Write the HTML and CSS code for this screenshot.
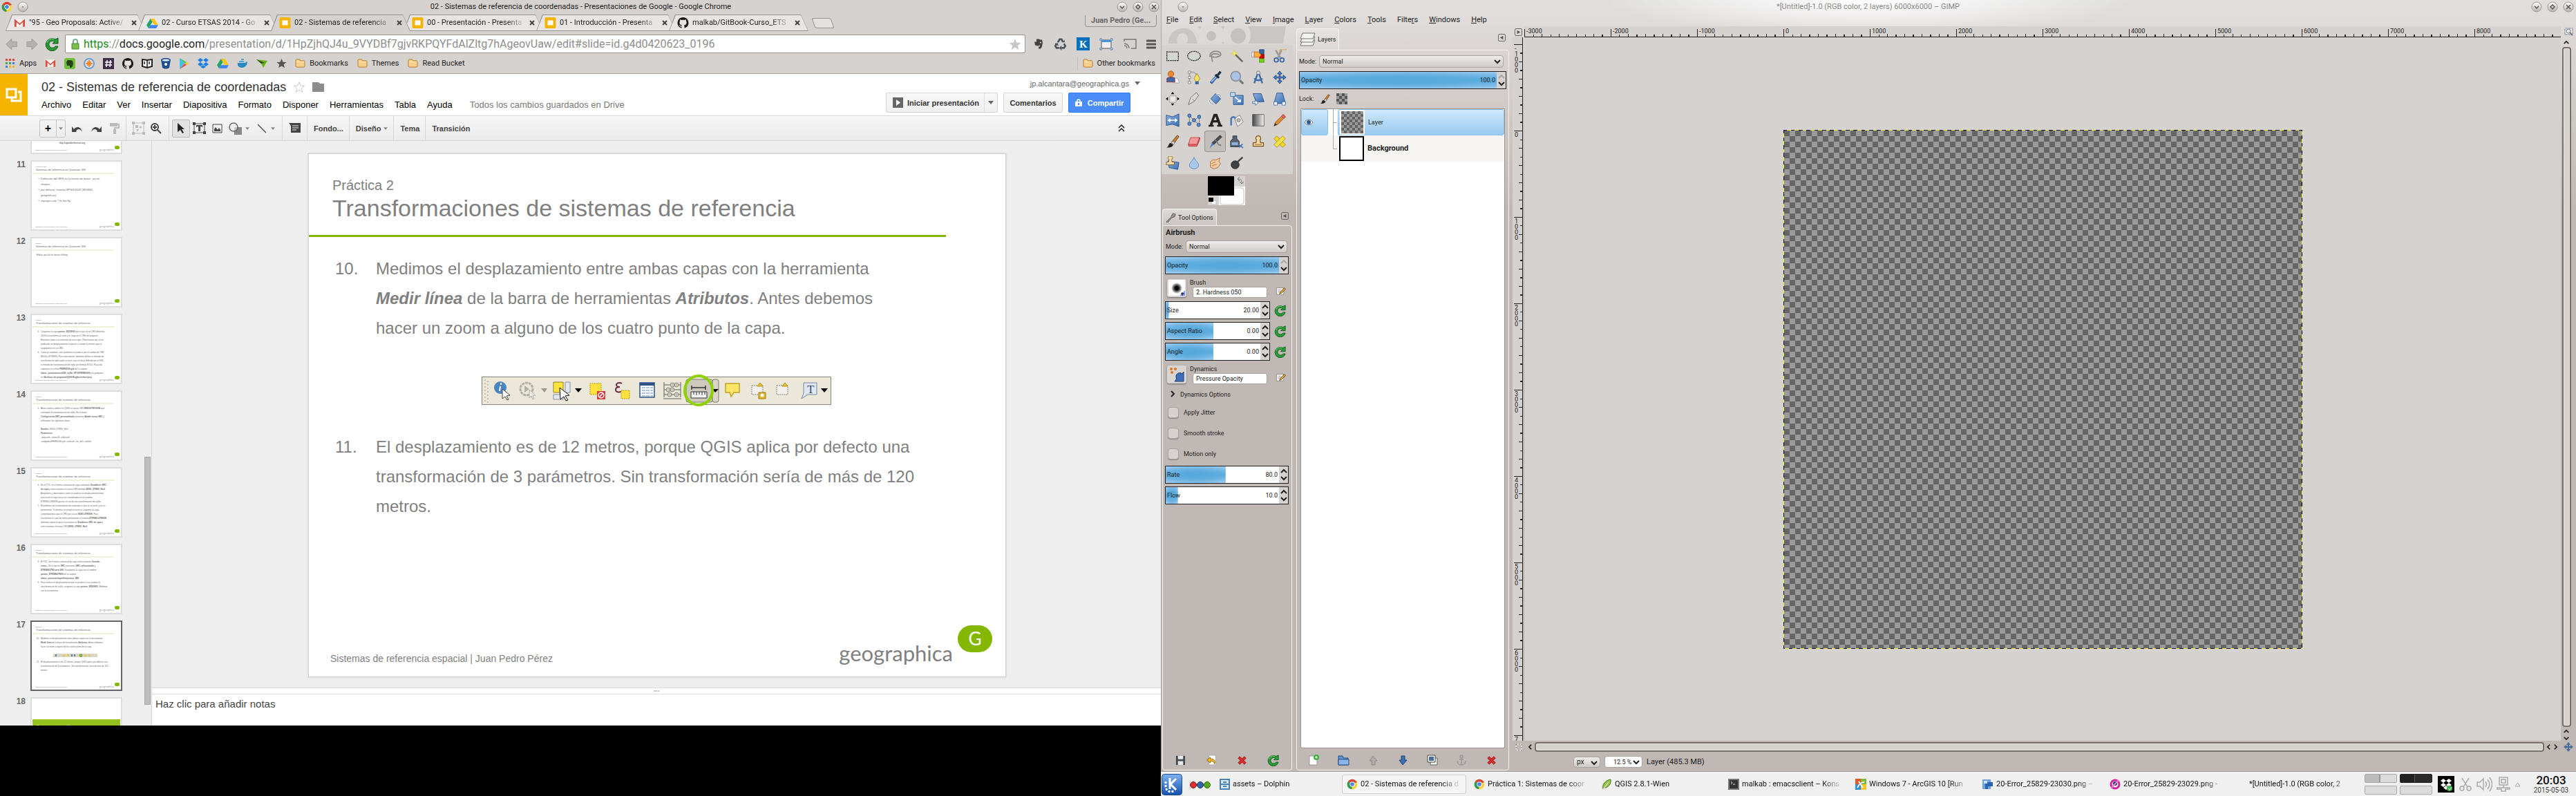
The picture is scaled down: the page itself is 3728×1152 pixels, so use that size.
FILE: index.html
```html
<!DOCTYPE html>
<html lang="es">
<head>
<meta charset="utf-8">
<title>02 - Sistemas de referencia de coordenadas</title>
<link rel="stylesheet" href="styles.css">
</head>
<body>
<svg class="defs" aria-hidden="true">
  <defs>
    <linearGradient id="g-blue" x1="0" y1="0" x2="1" y2="1"><stop offset="0" stop-color="#8fb4dd"/><stop offset="1" stop-color="#3a6fb5"/></linearGradient>
    <linearGradient id="g-bw"><stop offset="0" stop-color="#444"/><stop offset="1" stop-color="#f4f4f4"/></linearGradient>
    <linearGradient id="g-knob" x1="0" y1="0" x2="0" y2="1"><stop offset="0" stop-color="#fff"/><stop offset="1" stop-color="#b5b1ae"/></linearGradient>
    <radialGradient id="g-brush"><stop offset="0" stop-color="#000"/><stop offset=".35" stop-color="#111"/><stop offset="1" stop-color="#000" stop-opacity="0"/></radialGradient>
    <linearGradient id="g-kde" x1="0" y1="0" x2="0" y2="1"><stop offset="0" stop-color="#7fb2ee"/><stop offset="1" stop-color="#1451ae"/></linearGradient>
  </defs>
  <symbol id="chrome" viewBox="0 0 24 24"><circle cx="12" cy="12" r="11" fill="#fdd23a"/><path d="M12 12L2.500 6.500A11 11 0 0 1 21.500 6.500z" fill="#dc4437"/><path d="M12 12L2.500 6.500A11 11 0 0 0 11 23z" fill="#2e9a50"/><path d="M12 7h9.800" stroke="#dc4437" stroke-width="2"/><circle cx="12" cy="12" r="5.500" fill="#fff"/><circle cx="12" cy="12" r="4.200" fill="#4a84e8"/></symbol>
  <symbol id="gmail" viewBox="0 0 18 14"><path d="M1 1h16v12H1z" fill="#f4f2f0"/><path d="M1 13V1l8 7 8-7v12h-3V6L9 10.500 4 6v7z" fill="#dc4b3e"/></symbol>
  <symbol id="drive" viewBox="0 0 18 16"><path d="M6 1h6l6 10h-6z" fill="#fbc714"/><path d="M6 1l3 5-6 10-3-5z" fill="#21a464"/><path d="M6 11h12l-3 5H3z" fill="#4285f4"/></symbol>
  <symbol id="slides" viewBox="0 0 16 16"><rect width="16" height="16" rx="2" fill="#f4b400"/><path d="M4 4.500h8v7H4z" fill="#fff"/></symbol>
  <symbol id="github" viewBox="0 0 16 16"><path fill="#1b1817" d="M8 0C3.600 0 0 3.600 0 8c0 3.500 2.300 6.500 5.500 7.600.4.100.5-.200.5-.400v-1.500c-2.200.500-2.700-1-2.700-1-.4-.900-.900-1.200-.900-1.200-.7-.500.100-.500.100-.500.800.1 1.200.8 1.200.8.700 1.200 1.900.9 2.300.7.100-.5.300-.9.500-1.100-1.800-.2-3.600-.9-3.600-4 0-.9.300-1.600.8-2.100-.1-.2-.4-1 .1-2.100 0 0 .7-.2 2.200.8a7.600 7.600 0 0 1 4 0c1.500-1 2.200-.8 2.200-.8.400 1.100.2 1.900.1 2.100.5.600.8 1.300.8 2.100 0 3.100-1.900 3.700-3.700 3.900.3.300.6.800.6 1.500v2.200c0 .2.100.5.600.4A8 8 0 0 0 16 8c0-4.400-3.600-8-8-8z"/><path d="M5 4.500h6l1 3c0 2-1.500 3-4 3s-4-1-4-3z" fill="#e6e3e1"/></symbol>
  <symbol id="evernote" viewBox="0 0 16 16"><path d="M5 1h4l1 1h3l1 4-1 6-2 3H8v-3h2v-2l-3 1-4-1-1-5h3z" fill="currentColor"/><circle cx="11" cy="6" r="1" fill="#ddd"/></symbol>
  <symbol id="folder" viewBox="0 0 16 14"><path d="M1 2l1-1h5l1 2h6l1 1v8l-1 1H2l-1-1z" fill="#f8cf8b" stroke="#b47a25"/><path d="M2 5h12" stroke="#fdebc8"/></symbol>
  <symbol id="knob-dot" viewBox="0 0 16 16"><circle cx="8" cy="8" r="7" fill="url(#g-knob)" stroke="#9a9693"/><circle cx="8" cy="8" r="1" fill="#777"/></symbol>
  <symbol id="knob-min" viewBox="0 0 16 16"><circle cx="8" cy="8" r="7" fill="url(#g-knob)" stroke="#9a9693"/><path d="M5 7l3 3 3-3" fill="none" stroke="#555" stroke-width="1.500"/></symbol>
  <symbol id="knob-max" viewBox="0 0 16 16"><circle cx="8" cy="8" r="7" fill="url(#g-knob)" stroke="#9a9693"/><path d="M8 5l3 3-3 3-3-3z" fill="none" stroke="#555" stroke-width="1.500"/></symbol>
  <symbol id="knob-x" viewBox="0 0 16 16"><circle cx="8" cy="8" r="7" fill="url(#g-knob)" stroke="#9a9693"/><path d="M5 5l6 6M11 5l-6 6" stroke="#555" stroke-width="1.500"/></symbol>
  <symbol id="nav-back" viewBox="0 0 20 20"><path d="M10 1v5h8v8h-8v5L1 10z" fill="#b5b2b0" stroke="#9b9896"/></symbol>
  <symbol id="reload" viewBox="0 0 20 20"><path d="M15 3l4-2v8h-8l3-2.500A5 5 0 1 0 15 13h4A9 9 0 1 1 15 3z" fill="#2a9a35" stroke="#0d5a17"/><path d="M3 8a7 7 0 0 1 10-5" fill="none" stroke="#7fd686"/></symbol>
  <symbol id="star" viewBox="0 0 20 20"><path d="M10 1l2.600 6.500 6.900.4-5.300 4.400 1.800 6.700-6-3.800L4 19l1.800-6.700L.5 7.900l6.900-.4z"/></symbol>
  <symbol id="down" viewBox="0 0 8 5"><path d="M0 0h8L4 5z" fill="currentColor"/></symbol>
  <symbol id="chev" viewBox="0 0 12 8"><path d="M2 2l4 4 4-4" fill="none" stroke="#222" stroke-width="2"/></symbol>
  <symbol id="spin" viewBox="0 0 13 24"><path d="M0 0h13v24H0z" fill="#d6d2cf"/><path d="M3 9l4-4 4 4M3 15l4 4 4-4" fill="none" stroke="#222" stroke-width="2"/></symbol>
  <symbol id="spin-max" viewBox="0 0 13 24"><path d="M0 0h13v24H0z" fill="#d6d2cf"/><path d="M3 9l4-4 4 4" fill="none" stroke="#aaa6a3" stroke-width="2"/><path d="M3 15l4 4 4-4" fill="none" stroke="#222" stroke-width="2"/></symbol>
  <symbol id="collapse" viewBox="0 0 12 12"><rect x=".5" y=".5" width="11" height="11" rx="2" fill="none" stroke="#555"/><path d="M8 3v6L3 6z" fill="#555"/></symbol>
  <symbol id="edit" viewBox="0 0 16 16"><path d="M1 3h12v11H1z" fill="#f8f8f6" stroke="#888"/><path d="M3 6h6M3 8h5M3 10h4" stroke="#aaa"/><path d="M6 13l1-3 7-7 2 2-7 7z" fill="#d8a13b" stroke="#694a12"/></symbol>
  <symbol id="redx" viewBox="0 0 16 16"><path d="M4 1l4 4 4-4 3 3-4 4 4 4-3 3-4-4-4 4-3-3 4-4-4-4z" fill="#d92b2b" stroke="#8f1010"/></symbol>
  <symbol id="checker" viewBox="0 0 16 16"><path d="M0 0h16v16H0z" fill="#999"/><path d="M0 0h4v4H0zM8 0h4v4H8zM4 4h4v4H4zM12 4h4v4h-4zM0 8h4v4H0zM8 8h4v4H8zM4 12h4v4H4zM12 12h4v4h-4z" fill="#555"/></symbol>
  <symbol id="brush" viewBox="0 0 24 24"><path d="M20 1l3 2-9 13-4-3z" fill="#c17d32" stroke="#6b3e0b"/><path d="M12 11l4 3-2 3-4-3z" fill="#ddd" stroke="#777"/><path d="M1 22c5-1 3-6 7-8l5 3c0 4-6 6-12 5z" fill="#222"/></symbol>
  <symbol id="arrow-move" viewBox="0 0 24 24"><path d="M12 1l4 5h-3v5h5V8l5 4-5 4v-3h-5v5h3l-4 5-4-5h3v-5H6v3l-5-4 5-4v3h5V6H8z" fill="#4a80c4" stroke="#1e3f73"/></symbol>
  <symbol id="stamp" viewBox="0 0 24 24"><path d="M12 2a4 4 0 0 1 3 7l1 5h5v6H3v-6h5l1-5a4 4 0 0 1 3-7z" fill="#f2d9a5" stroke="#7c5718" stroke-width="1.500"/><path d="M6 17h12" stroke="#7c5718"/></symbol>
</svg>

<div class="desktop">
<div class="screen-left">
<section class="chrome">
  <div class="c-title">
    <svg width="16" height="16"><use href="#chrome"/></svg>
    <svg width="16" height="16"><use href="#knob-dot"/></svg>
    <span class="c-caption">02 - Sistemas de referencia de coordenadas - Presentaciones de Google - Google Chrome</span>
    <svg width="16" height="16"><use href="#knob-min"/></svg>
    <svg width="16" height="16"><use href="#knob-max"/></svg>
    <svg width="16" height="16"><use href="#knob-x"/></svg>
  </div>
  <div class="c-tabs">
    <div class="tab"><svg width="17" height="14"><use href="#gmail"/></svg><span>"95 - Geo Proposals: Active/</span><button aria-label="Cerrar"><svg width="8" height="8" viewBox="0 0 8 8"><path d="M1 1l6 6M7 1L1 7" stroke="#444" stroke-width="2"/></svg></button></div>
    <div class="tab"><svg width="17" height="15"><use href="#drive"/></svg><span>02 - Curso ETSAS 2014 - Go</span><button aria-label="Cerrar"><svg width="8" height="8" viewBox="0 0 8 8"><path d="M1 1l6 6M7 1L1 7" stroke="#444" stroke-width="2"/></svg></button></div>
    <div class="tab on"><svg width="17" height="16"><use href="#slides"/></svg><span>02 - Sistemas de referencia</span><button aria-label="Cerrar"><svg width="8" height="8" viewBox="0 0 8 8"><path d="M1 1l6 6M7 1L1 7" stroke="#444" stroke-width="2"/></svg></button></div>
    <div class="tab"><svg width="17" height="16"><use href="#slides"/></svg><span>00 - Presentación - Presenta</span><button aria-label="Cerrar"><svg width="8" height="8" viewBox="0 0 8 8"><path d="M1 1l6 6M7 1L1 7" stroke="#444" stroke-width="2"/></svg></button></div>
    <div class="tab"><svg width="17" height="16"><use href="#slides"/></svg><span>01 - Introducción - Presenta</span><button aria-label="Cerrar"><svg width="8" height="8" viewBox="0 0 8 8"><path d="M1 1l6 6M7 1L1 7" stroke="#444" stroke-width="2"/></svg></button></div>
    <div class="tab"><svg width="17" height="16"><use href="#github"/></svg><span>malkab/GitBook-Curso_ETS</span><button aria-label="Cerrar"><svg width="8" height="8" viewBox="0 0 8 8"><path d="M1 1l6 6M7 1L1 7" stroke="#444" stroke-width="2"/></svg></button></div>
    <div class="newtab"></div>
    <button class="profile">Juan Pedro (Ge...</button>
  </div>
  <div class="c-bar">
    <svg width="20" height="18"><use href="#nav-back"/></svg>
    <svg class="flip" width="20" height="18"><use href="#nav-back"/></svg>
    <svg width="20" height="20"><use href="#reload"/></svg>
    <div class="omni">
      <svg width="12" height="16" viewBox="0 0 12 16"><path d="M3 8V4a3 3 0 0 1 6 0v4" fill="none" stroke="#7a9" stroke-width="2"/><path d="M1 7h10v8H1z" fill="#7cc04b" stroke="#4b8a2c"/></svg>
      <span class="url"><b>https</b>://<i>docs.google.com</i>/presentation/d/1HpZjhQJ4u_9VYDBf7gjvRKPQYFdAlZltg7hAgeovUaw/edit#slide=id.g4d0420623_0196</span>
      <svg class="favstar" width="18" height="18"><use href="#star"/></svg>
    </div>
    <div class="exts">
      <svg class="ever" width="16" height="17"><use href="#evernote"/></svg>
      <svg width="19" height="18" viewBox="0 0 20 20"><g fill="none" stroke="#4d555c" stroke-width="3"><path d="M6 7l3-5h3l2 4"/><path d="M16 9l2 4-2 3h-4"/><path d="M8 16H4l-2-3 2-4"/></g><path d="M12 7h5V3zM12 12v8l-4-4zM1 9l5-1 1 5z" fill="#4d555c"/></svg>
      <svg width="19" height="19" viewBox="0 0 19 19"><path d="M0 0h19v19H0z" fill="#0070bf"/><text x="4" y="15" class="k-mark">K</text></svg>
      <svg width="20" height="18" viewBox="0 0 20 18"><path d="M3 3h14v12H3z" fill="#eee" stroke="#555"/><path d="M3 3h14v3H3z" fill="#4b93dd"/><path d="M1 4V1h3M16 1h3v3M19 14v3h-3M4 17H1v-3" fill="none" stroke="#2c7fd4"/></svg>
      <svg width="20" height="16" viewBox="0 0 20 16"><path d="M2 4V1h17v13h-7M2 14h0M2 10a4 4 0 0 1 4 4M2 7a7 7 0 0 1 7 7" fill="none" stroke="#777" stroke-width="1.500"/></svg>
      <svg width="14" height="14" viewBox="0 0 14 14"><path d="M1 2h12M1 7h12M1 12h12" stroke="#555" stroke-width="3" stroke-linecap="round"/></svg>
    </div>
  </div>
  <div class="c-marks">
    <a href="#" class="apps"><svg width="14" height="14" viewBox="0 0 14 14"><path d="M0 0h3v3H0zM5 0h3v3H5zM10 0h3v3h-3z" fill="#e0483a"/><path d="M0 5h3v3H0zM5 5h3v3H5z" fill="#3ea654"/><path d="M10 5h3v3h-3z" fill="#3d7fe0"/><path d="M0 10h3v3H0z" fill="#3d7fe0"/><path d="M5 10h3v3H5zM10 10h3v3h-3z" fill="#f0b41c"/></svg>Apps</a>
    <svg width="16" height="13"><use href="#gmail"/></svg>
    <svg width="16" height="16" viewBox="0 0 16 16"><rect width="16" height="16" rx="3" fill="#6fbf3a"/><path d="M5 3h4l3 1 1 4-1 4-2 2H8v-3H4L3 6z" fill="#26431a"/></svg>
    <svg width="16" height="16" viewBox="0 0 16 16"><circle cx="8" cy="8" r="7" fill="#e8edf4" stroke="#6b9bd0" stroke-width="2"/><path d="M8 3v10M3 8h10M5 5l6 6M11 5l-6 6" stroke="#ef8a2e" stroke-width="2"/></svg>
    <svg width="16" height="16" viewBox="0 0 16 16"><path d="M0 0h16v16H0z" fill="#3f2d4a"/><path d="M6 3L5 13M11 3l-1 10M3 6h10M3 10h10" stroke="#fff" stroke-width="1.500"/></svg>
    <svg width="16" height="16"><use href="#github"/></svg>
    <svg width="16" height="14" viewBox="0 0 16 14"><path d="M8 2L1 1v10l7 2 7-2V1z" fill="#fff" stroke="#222" stroke-width="2"/><path d="M8 2v11M4 4v4M11 4v4" stroke="#222" stroke-width="1.500"/></svg>
    <svg width="14" height="16" viewBox="0 0 14 16"><path d="M0 2c4-3 10-3 14 0l-2 12c-3 2-7 2-10 0z" fill="#20508a"/><ellipse cx="7" cy="3" rx="5" ry="1.500" fill="#dbe6f2"/><circle cx="7" cy="9" r="2" fill="#fff"/></svg>
    <svg width="15" height="16" viewBox="0 0 15 16"><path d="M1 0l7 8-7 8z" fill="#3fc1e8"/><path d="M1 0l10 6-3 2z" fill="#43c46b"/><path d="M11 6l4 2-4 2-3-2z" fill="#fbc52b"/><path d="M1 16l10-6-3-2z" fill="#ea4646"/></svg>
    <svg width="16" height="15" viewBox="0 0 16 15"><path d="M4 0l4 3-4 3-4-3zM12 0l4 3-4 3-4-3zM4 6l4 3-4 3-4-3zM12 6l4 3-4 3-4-3zM8 10l4 3-4 2-4-2z" fill="#1a7fe6"/></svg>
    <svg width="17" height="15"><use href="#drive"/></svg>
    <svg width="16" height="13" viewBox="0 0 16 13"><path d="M1 6h10c2 0 2-2 4-2 0 6-4 9-8 9S0 10 1 6z" fill="#2a8bc0"/><path d="M3 3h7v2H3zM6 0h4v2H6z" fill="#4aa6d8"/></svg>
    <svg width="17" height="13" viewBox="0 0 17 13"><path d="M0 1l16 2-6 10-3-6z" fill="#6ab417"/><path d="M0 1l12 5-5 1z" fill="#2f4a14"/></svg>
    <svg class="graystar" width="15" height="15"><use href="#star"/></svg>
    <a href="#"><svg width="15" height="13"><use href="#folder"/></svg>Bookmarks</a>
    <a href="#"><svg width="15" height="13"><use href="#folder"/></svg>Themes</a>
    <a href="#"><svg width="15" height="13"><use href="#folder"/></svg>Read Bucket</a>
    <a href="#" class="other"><svg width="15" height="13"><use href="#folder"/></svg>Other bookmarks</a>
  </div>

  <header class="d-head">
    <div class="d-logo"><svg width="24" height="21" viewBox="0 0 24 21"><path d="M2 2h13v12H2z" fill="none" stroke="#fff" stroke-width="3"/><path d="M18 6h4v13H9v-4" fill="none" stroke="#fff" stroke-width="3"/></svg></div>
    <div class="d-names">
      <h1>02 - Sistemas de referencia de coordenadas
        <svg class="outstar" width="16" height="16"><use href="#star"/></svg><svg width="17" height="14" viewBox="0 0 17 14"><path d="M0 0h9l2 2h6v12H0z" fill="#8c8c8c"/></svg></h1>
      <nav class="d-menu"><button>Archivo</button><button>Editar</button><button>Ver</button><button>Insertar</button><button>Diapositiva</button><button>Formato</button><button>Disponer</button><button>Herramientas</button><button>Tabla</button><button>Ayuda</button><span>Todos los cambios guardados en Drive</span></nav>
    </div>
    <div class="d-right">
      <div class="d-mail">jp.alcantara@geographica.gs <svg width="8" height="5"><use href="#down"/></svg></div>
      <div class="d-btns">
        <div class="split"><button><svg width="15" height="15" viewBox="0 0 15 15"><path d="M0 0h15v15H0z" fill="#666"/><path d="M5 3l6 4.500L5 12z" fill="#fff"/></svg>Iniciar presentación</button><button class="dd" aria-label="Más"><svg width="8" height="5"><use href="#down"/></svg></button></div>
        <button class="btn">Comentarios</button>
        <button class="btn blue"><svg width="10" height="11" viewBox="0 0 10 11"><path d="M3 5V3a2 2 0 0 1 4 0v2" fill="none" stroke="#fff" stroke-width="1.500"/><path d="M0 4h10v7H0z" fill="#fff"/><path d="M4 6h2v3H4z" fill="#4d90fe"/></svg>Compartir</button>
      </div>
    </div>
  </header>

  <div class="d-tools">
    <div class="grp first">
      <div class="plus"><button aria-label="Nueva">+</button><button aria-label="Tipo"><svg width="6" height="4"><use href="#down"/></svg></button></div>
      <button class="ic"><svg width="16" height="10" viewBox="0 0 16 10"><path d="M3 6c4-5 10-4 12 4-3-5-7-5-9-1l2 2H0V2z" fill="#444"/></svg></button>
      <button class="ic"><svg width="16" height="10" viewBox="0 0 16 10"><path d="M13 6C9 1 3 2 1 10c3-5 7-5 9-1l-2 2h8V2z" fill="#444"/></svg></button>
      <button class="ic"><svg width="15" height="16" viewBox="0 0 15 16"><path d="M1 0h11v5H1z" fill="#bbb"/><path d="M12 2h2v5H8v2" fill="none" stroke="#bbb" stroke-width="2"/><path d="M6 9h4v7H6z" fill="#bbb"/></svg></button>
    </div>
    <div class="grp">
      <button class="ic"><svg width="19" height="19" viewBox="0 0 19 19"><path d="M2 2h15v15H2z" fill="none" stroke="#bbb"/><path d="M0 0h4v4H0zM15 0h4v4h-4zM0 15h4v4H0zM15 15h4v4h-4zM5 5h4v4H5zM11 6l4 2-4 2zM6 11h4l-2 4z" fill="#bbb"/></svg></button>
      <button class="ic"><svg width="16" height="16" viewBox="0 0 16 16"><circle cx="6" cy="6" r="5" fill="none" stroke="#444" stroke-width="2"/><path d="M6 3v6M3 6h6M10 10l5 5" stroke="#444" stroke-width="2"/></svg></button>
    </div>
    <div class="grp">
      <button class="ic on"><svg width="10" height="15" viewBox="0 0 10 15"><path d="M0 0l10 9H6l3 5-2 1-3-5-4 3z" fill="#222"/></svg></button>
      <button class="ic"><svg width="19" height="17" viewBox="0 0 19 17"><path d="M2 2h15v13H2z" fill="none" stroke="#444"/><path d="M0 0h4v4H0zM15 0h4v4h-4zM0 13h4v4H0zM15 13h4v4h-4z" fill="#444"/><path d="M5 4h9v3h-1V6h-2v7H8V6H6v1H5z" fill="#444"/></svg></button>
      <button class="ic"><svg width="15" height="14" viewBox="0 0 15 14"><path d="M1 1h13v12H1z" fill="none" stroke="#444"/><path d="M3 11V8l2-3 3 4 2-3 2 3v2z" fill="#444"/></svg></button>
      <button class="ic wide"><svg width="20" height="18" viewBox="0 0 20 18"><path d="M8 7h11v11H8z" fill="#888"/><circle cx="7" cy="7" r="6" fill="#f1f1f1" fill-opacity=".6" stroke="#666" stroke-width="1.500"/></svg><svg width="6" height="4"><use href="#down"/></svg></button>
      <button class="ic wide"><svg width="18" height="14" viewBox="0 0 18 14"><path d="M3 1l12 12" stroke="#555" stroke-width="1.500"/></svg><svg width="6" height="4"><use href="#down"/></svg></button>
    </div>
    <div class="grp"><button class="ic"><svg width="17" height="15" viewBox="0 0 17 15"><path d="M0 0h17v14H3V4z" fill="#444"/><path d="M5 4h9M5 7h9M5 10h6" stroke="#eee"/></svg></button></div>
    <div class="grp txt"><button>Fondo...</button></div>
    <div class="grp txt"><button>Diseño <svg width="6" height="4"><use href="#down"/></svg></button></div>
    <div class="grp txt"><button>Tema</button></div>
    <div class="grp txt"><button>Transición</button></div>
    <button class="fold" aria-label="Ocultar menús"><svg width="10" height="11" viewBox="0 0 10 11"><path d="M1 5l4-4 4 4M1 10l4-4 4 4" fill="none" stroke="#222" stroke-width="1.500"/></svg></button>
  </div>

  <div class="d-body">
    <aside class="film">
      <div class="film-list">
        <div class="row cut"><span></span><div class="thumb"><div class="tb center"><b>http://spatialreference.org</b></div><div class="tf"><span>Sistemas de referencia espacial | Juan Pedro Pérez</span><em>geographica</em><i></i></div></div></div>
        <div class="row"><span>11</span><div class="thumb"><div class="ts">Herramientas SIG</div><div class="tt">Sistemas de referencia en Quantum GIS</div><div class="tb big"><u>•</u><p>Definición del SRS en la fuente de datos: .prj en<br>shapes;</p><u>•</u><p>por defecto, sistema EPSG:4326 (WGS84<br>geográficas);</p><u>•</u><p>reproyección "On the fly".</p></div><div class="tf"><span>Sistemas de referencia espacial | Juan Pedro Pérez</span><em>geographica</em><i></i></div></div></div>
        <div class="row"><span>12</span><div class="thumb"><div class="ts">Práctica 1</div><div class="tt">Sistemas de referencia en Quantum GIS</div><div class="tb solo"><p>Hablar aquí de los datum shiftings.</p></div><div class="tf"><span>Sistemas de referencia espacial | Juan Pedro Pérez</span><em>geographica</em><i></i></div></div></div>
        <div class="row"><span>13</span><div class="thumb"><div class="ts">Práctica 2</div><div class="tt">Transformaciones de sistemas de referencia</div><div class="tb"><u>3.</u><p>Cargamos la capa <b>puntos_ED50H30</b> que están en un CRS diferente.<br>QGIS la transforma al vuelo y la carga en el CRS del proyecto.<br>Hacemos zoom a la extensión de esta capa. Observamos que se ha<br>producido un desplazamiento respecto a cuando la misma capa la<br>cargábamos en su CRS.</p><u>4.</u><p>Como ya sabemos, este problema se produce por el cambio de CRS<br>(ED50 a ETRS89). Para solucionarlo, debemos definir un método de<br>transformación adecuado: en este caso el oficial definido por el IGN,<br>el método de transformación de rejilla (en formato NTv2). Para ello,<br>copiamos el archivo <b>PENR2009.gsb</b> de la carpeta<br><b>/datos_practica/otros/IGN_rejilla_NTV2/PENR2009</b> y lo grabamos<br>en <b>/Archivos de programa/QGIS Brighton/share/proj</b></p></div><div class="tf"><span>Sistemas de referencia espacial | Juan Pedro Pérez</span><em>geographica</em><i></i></div></div></div>
        <div class="row"><span>14</span><div class="thumb"><div class="ts">Práctica 2</div><div class="tt">Transformaciones de sistemas de referencia</div><div class="tb"><u>5.</u><p>Ahora vamos a definir en QGIS un nuevo CRS <b>ED50/UTM H30N</b> que<br>contemple la transformación de rejilla. En el menú<br><b>Configuración-SRC personalizado</b> pulsamos <b>Añadir nuevo SRC</b> y<br>rellenamos los siguientes datos:<br><br><b>Nombre:</b> ED50_UTM30_Ntv2<br><b>Parámetros:</b><br>+proj=utm +zone=30 +ellps=intl<br>+nadgrids=PENR2009.gsb +units=m +no_defs +wktext</p></div><div class="tf"><span>Sistemas de referencia espacial | Juan Pedro Pérez</span><em>geographica</em><i></i></div></div></div>
        <div class="row"><span>15</span><div class="thumb"><div class="ts">Práctica 2</div><div class="tt">Transformaciones de sistemas de referencia</div><div class="tb"><u>6.</u><p>En el TOC, en el menú contextual de capa señalamos <b>Establecer SRC<br>de capa</b> y seleccionamos el nuevo CRS definido <b>ED50_UTM30_Ntv2</b>.<br>Aceptamos y observamos como se produce un desplazamiento más<br>preciso de la capa hacia sus coordenadas en el sistema<br>ETRS89-UTM30N gracias al uso de una transformación de rejilla.</p><u>7.</u><p>El problema de la transformación realizada es que es al vuelo, y no es<br>permanente. Si abrimos un proyecto nuevo y cargamos la capa,<br>comprobaremos que el CRS que usa es <b>ED50-UTM30N</b>. Para<br>transformar la capa de forma permanente al sistema <b>ETRS89-UTM30N</b><br>debemos repetir el paso 6 pulsamos en <b>Establecer SRC de capa</b> y<br>seleccionamos el nuevo CRS <b>ED50_UTM30_Ntv2</b></p></div><div class="tf"><span>Sistemas de referencia espacial | Juan Pedro Pérez</span><em>geographica</em><i></i></div></div></div>
        <div class="row"><span>16</span><div class="thumb"><div class="ts">Práctica 2</div><div class="tt">Transformaciones de sistemas de referencia</div><div class="tb"><u>8.</u><p>El TOC, en el menú contextual de capa seleccionamos <b>Guardar<br>como...</b> En la opción <b>SRC</b> marcamos <b>SRC seleccionado</b> y<br><b>ETRS89/UTM zona 30N</b>. Guardamos la capa con el nombre<br><b>puntos_ETRS89UTM30</b> en la carpeta<br><b>/datos_practica/shapefiles/puntos_BM.</b></p><u>9.</u><p>Para verificar el desplazamiento que se produce si no usamos la<br>transformación de rejilla, cargamos la capa <b>puntos_ED50H30</b>. Medimos<br>con la herramienta.</p></div><div class="tf"><span>Sistemas de referencia espacial | Juan Pedro Pérez</span><em>geographica</em><i></i></div></div></div>
        <div class="row cur"><span>17</span><div class="thumb"><div class="ts">Práctica 2</div><div class="tt">Transformaciones de sistemas de referencia</div><div class="tb"><u>10.</u><p>Medimos el desplazamiento entre ambas capas con la herramienta<br><b>Medir línea</b> de la barra de herramientas <b>Atributos</b>. Antes debemos<br>hacer un zoom a alguno de los cuatro punto de la capa.</p><svg class="mini" width="64" height="5" viewBox="0 0 64 5"><path d="M0 0h64v5H0z" fill="#d9d6c4"/><path d="M3 1h2v3H3zM26 1h2v3h-2zM30 1h2v3h-2z" fill="#5b82b5"/><path d="M14 1h3v3h-3zM20 1h3v3h-3zM45 1h3v3h-3zM51 1h2v3h-2z" fill="#e3cb5a"/><circle cx="40" cy="2.500" r="2.500" fill="#8fae4c"/></svg><u>11.</u><p>El desplazamiento es de 12 metros, porque QGIS aplica por defecto una<br>transformación de 3 parámetros. Sin transformación sería de más de 120<br>metros.</p></div><div class="tf"><span>Sistemas de referencia espacial | Juan Pedro Pérez</span><em>geographica</em><i></i></div></div></div>
        <div class="row"><span>18</span><div class="thumb"><div class="cover">Fuentes cartográficas</div></div></div>
      </div>
      <div class="film-bar"><div></div></div>
    </aside>
    <main class="work">
      <div class="stage">
        <article class="slide">
          <p class="s-sub">Práctica 2</p>
          <h2>Transformaciones de sistemas de referencia</h2>
          <div class="s-rule"></div>
          <ol start="10" class="s-list"><li>Medimos el desplazamiento entre ambas capas con la herramienta<br><b>Medir línea</b> de la barra de herramientas <b>Atributos</b>. Antes debemos<br>hacer un zoom a alguno de los cuatro punto de la capa.</li></ol>
          <svg class="qbar" width="506" height="41" viewBox="0 0 506 41">
            <path d="M.5.5h505v40H.5z" fill="#ebe8d9" stroke="#85837a"/>
            <path d="M5 4v34M9 6v34" stroke="#c5c2b3" stroke-width="2" stroke-dasharray="2 3"/>
            <circle cx="27" cy="16" r="9" fill="#4c83c3"/><path d="M28 9v3M27 14l-1 7" stroke="#fff" stroke-width="2"/><path d="M30 18l11 9-5 1 3 5-2 1-3-5-4 3z" fill="#fff" stroke="#444"/>
            <g opacity=".6"><circle cx="65" cy="18" r="9" fill="none" stroke="#8b8a82" stroke-width="3" stroke-dasharray="4 1"/><path d="M62 13l7 5-7 5z" fill="#8b8a82"/><path d="M69 19l9 8-4 1 2 4-2 1-2-5-3 3z" fill="#eee" stroke="#888"/></g>
            <path d="M86 17h9l-4 6z" fill="#99978d"/>
            <path d="M104 8h14v15h-14z" fill="#ffe23d" stroke="#938324"/><path d="M121 8h7v15h-7zM104 26h14v7h-14z" fill="#e3e7ee" stroke="#8893a6"/><path d="M113 16l14 11-6 1 4 6-3 1-3-6-5 4z" fill="#fff" stroke="#111"/>
            <path d="M135 17h10l-5 6z"/>
            <path d="M157 10h16v16h-16z" fill="#ffe23d" stroke="#c29b16" stroke-dasharray="2 1"/><path d="M167 21h12v12h-12z" fill="#d63a3a"/><circle cx="173" cy="27" r="4" fill="none" stroke="#fff" stroke-width="1.500"/><path d="M170 30l6-6" stroke="#fff" stroke-width="1.500"/>
            <path d="M203 10c-3-2-8-1-8 2 0 2 3 3 5 3-3 0-6 1-6 4 0 4 7 5 10 1" fill="none" stroke="#6d2948" stroke-width="2"/><path d="M202 20h12v12h-12z" fill="#ffe23d" stroke="#c29b16" stroke-dasharray="2 1"/>
            <path d="M229 9h21v21h-21z" fill="#f5f8fc" stroke="#2d5286" stroke-width="1.500"/><path d="M229 9h21v4h-21z" fill="#2d5286"/><path d="M232 16h16M232 20h16M232 24h16M232 28h16" stroke="#6d93c2" stroke-dasharray="5 1"/>
            <path d="M264 8v22M288 8v22M264 12h24M264 19h24M264 26h24M263 32h26" stroke="#8c8b80" stroke-width="1.500"/><g fill="#ccc9ba" stroke="#8c8b80"><circle cx="276" cy="12" r="3"/><circle cx="282" cy="12" r="3"/><circle cx="270" cy="19" r="3"/><circle cx="276" cy="19" r="3"/><circle cx="272" cy="26" r="3"/><circle cx="282" cy="26" r="3"/></g>
            <rect x="296" y="4" width="38" height="33" rx="3" fill="#cdcabd" stroke="#7d7b70"/><rect x="334" y="4" width="9" height="33" rx="3" fill="#d9d6c8" stroke="#7d7b70"/><path d="M334 18h9l-5 5z"/>
            <path d="M304 16h20M304 13v6M324 13v6" stroke="#333" stroke-width="1.500"/><path d="M303 22h23v9h-23z" fill="#f2f2f2" stroke="#333"/><path d="M307 22v4M311 22v5M315 22v4M319 22v5M323 22v4" stroke="#333"/>
            <ellipse cx="314" cy="20" rx="20" ry="21" fill="none" stroke="#8fd000" stroke-width="4"/>
            <path d="M353 10h20v13h-8l-4 6-2-6h-6z" fill="#fbe66a" stroke="#c4a322" stroke-width="1.500"/>
            <path d="M391 13h16v13h-16z" fill="#f1f0ea" stroke="#888" stroke-dasharray="2 1"/><path d="M399 14l4-5 4 5z" fill="#f0c52d" stroke="#b78c10"/><path d="M401 23h10v9h-10z" fill="#e5b62a" stroke="#a57b10"/><circle cx="406" cy="27" r="2.500" fill="#fff"/>
            <path d="M427 13h16v13h-16z" fill="#f1f0ea" stroke="#888" stroke-dasharray="2 1"/><path d="M435 14l4-5 4 5z" fill="#f0c52d" stroke="#b78c10"/>
            <path d="M466 9h19v17h-13l-9 6 3-8z" fill="#dfe7f1" stroke="#7689a3"/><text x="471" y="24" class="q-t">T</text>
            <path d="M491 17h10l-5 6z"/>
          </svg>
          <ol start="11" class="s-list"><li>El desplazamiento es de 12 metros, porque QGIS aplica por defecto una<br>transformación de 3 parámetros. Sin transformación sería de más de 120<br>metros.</li></ol>
          <footer><span class="s-foot">Sistemas de referencia espacial | Juan Pedro Pérez</span><span class="s-logo">geographica</span><span class="s-g">G</span></footer>
        </article>
      </div>
      <div class="grip">•••</div>
      <div class="notes">Haz clic para añadir notas</div>
    </main>
  </div>
</section>
<div class="void"></div>
</div>

<div class="screen-right">
<section class="gimp">
  <div class="g-title">
    <svg width="16" height="16"><use href="#knob-dot"/></svg>
    <span>*[Untitled]-1.0 (RGB color, 2 layers) 6000x6000 – GIMP</span>
    <svg width="16" height="16"><use href="#knob-min"/></svg><svg width="16" height="16"><use href="#knob-max"/></svg><svg width="16" height="16"><use href="#knob-x"/></svg>
  </div>
  <nav class="g-menu"><button><u>F</u>ile</button><button><u>E</u>dit</button><button><u>S</u>elect</button><button><u>V</u>iew</button><button><u>I</u>mage</button><button><u>L</u>ayer</button><button><u>C</u>olors</button><button><u>T</u>ools</button><button>Filte<u>r</u>s</button><button><u>W</u>indows</button><button><u>H</u>elp</button></nav>
  <div class="g-main">
    <div class="g-left">
      <svg class="wilber" width="190" height="25" viewBox="0 0 190 25"><path d="M10 25C10 10 20 3 32 3s16 6 20 22H36c4-6 2-14-5-15-9 0-9 9-8 15zM52 0h128l-4 25H64C62 14 58 6 52 0z" fill="#c9c7c5"/><circle cx="72" cy="13" r="19" fill="#dcd9d7"/><circle cx="72" cy="14" r="7" fill="#c4c2c0"/><circle cx="108" cy="13" r="21" fill="#dcd9d7"/><circle cx="111" cy="14" r="11" fill="#c4c2c0"/></svg>
      <div class="toolbox">
        <button><svg viewBox="0 0 24 24"><path d="M2 5h20v15H2z" fill="#d4d6d3" stroke="#fff"/><path d="M2 5h20v15H2z" fill="none" stroke="#000" stroke-width="1.500" stroke-dasharray="2 1"/></svg></button>
        <button><svg viewBox="0 0 24 24"><ellipse cx="12" cy="12" rx="11" ry="8" fill="#d4d6d3" stroke="#fff"/><ellipse cx="12" cy="12" rx="11" ry="8" fill="none" stroke="#000" stroke-width="1.500" stroke-dasharray="2 1"/></svg></button>
        <button><svg viewBox="0 0 24 24"><path d="M3 14C0 7 8 3 15 4s9 7 2 9-13 1-12-2 9-4 14-1M5 13l2 9" fill="none" stroke="#888a85" stroke-width="2"/></svg></button>
        <button><svg viewBox="0 0 24 24"><path d="M9 9l13 13" stroke="#666a60" stroke-width="3"/><path d="M8 1l1 5 5 2-5 1-1 5-2-5-5-1 5-2z" fill="#f7e864" stroke="#d9cf70"/></svg></button>
        <button><svg viewBox="0 0 24 24"><path d="M14 1h8v7h-8z" fill="#3465a4" stroke="#204a87"/><path d="M14 9h8v7h-8z" fill="#cc0000" stroke="#900"/><path d="M14 17h8v6h-8z" fill="#73d216" stroke="#4e9a06"/><path d="M1 5h4v9H1z" fill="#fff" stroke="#888"/><path d="M5 5h7l5 5-3 4H5z" fill="#fcaf3e" stroke="#ce5c00"/></svg></button>
        <button><svg viewBox="0 0 24 24"><path d="M5 2l8 13M15 2L9 15" stroke="#999" stroke-width="3"/><circle cx="6" cy="19" r="3.500" fill="none" stroke="#3465a4" stroke-width="2"/><circle cx="16" cy="19" r="3.500" fill="none" stroke="#3465a4" stroke-width="2"/><path d="M12 8V1h12" fill="none" stroke="#d98b1c" stroke-dasharray="3 1"/></svg></button>

        <button><svg viewBox="0 0 24 24"><path d="M12 21c0-6 2-8 5-8s6 3 6 9z" fill="#fff" stroke="#999"/><circle cx="9" cy="6" r="5" fill="#f08a2c" stroke="#a85208"/><path d="M2 20v-6c0-3 14-3 14 0v6z" fill="#3d68a8" stroke="#a40000" stroke-dasharray="2 1"/></svg></button>
        <button><svg viewBox="0 0 24 24"><path d="M4 3v18M4 3c10-2 12 3 13 8" fill="none" stroke="#777"/><path d="M2 1h4v4H2zM2 10h4v4H2zM2 19h4v4H2z" fill="#fff" stroke="#777"/><path d="M17 5l5 9-3 5h-4l-3-5z" fill="#fbe36a" stroke="#a8850a"/><path d="M14 19h6v5h-6z" fill="#3465a4"/></svg></button>
        <button><svg viewBox="0 0 24 24"><path d="M15 9L4 22" stroke="#2d5a9c" stroke-width="5"/><path d="M15 9L5 20" stroke="#a9c8ec" stroke-width="2"/><path d="M12 7l6 6M16 8l5-6" stroke="#1d2b3f" stroke-width="4"/></svg></button>
        <button><svg viewBox="0 0 24 24"><path d="M17 17l6 6" stroke="#777" stroke-width="4"/><circle cx="10" cy="10" r="8.500" fill="#a9c3e4" stroke="#8c9096" stroke-width="2"/></svg></button>
        <button><svg viewBox="0 0 24 24"><path d="M11 5L5 22M13 5l6 17M5 14c4 4 10 4 14 0" fill="none" stroke="#3f6fab" stroke-width="3"/><circle cx="12" cy="4" r="3" fill="#ddd" stroke="#666"/></svg></button>
        <button><svg><use href="#arrow-move"/></svg></button>

        <button><svg viewBox="0 0 24 24"><path d="M7 7h11v11H7z" fill="#e8e8e6" stroke="#999"/><path d="M12 0l3 4h-6zM12 24l3-4h-6zM0 12l4-3v6zM24 12l-4-3v6z" fill="#111"/></svg></button>
        <button><svg viewBox="0 0 24 24"><path d="M2 22l4-12L16 1l4 5-7 10-10 6z" fill="#d9d9d6" stroke="#666"/><path d="M9 12l4 4" stroke="#666"/></svg></button>
        <button><svg viewBox="0 0 24 24"><path d="M4 12l8-9 9 9-8 9z" fill="url(#g-blue)" stroke="#204a87"/><path d="M14 5c4-2 6 0 7 3M2 15c0 4 2 6 6 6" fill="none" stroke="#fff" stroke-width="3"/><path d="M14 5c4-2 6 0 7 3M2 15c0 4 2 6 6 6" fill="none" stroke="#3465a4"/></svg></button>
        <button><svg viewBox="0 0 24 24"><path d="M6 6h17v16H6z" fill="url(#g-blue)" stroke="#204a87"/><path d="M1 1h8v7H1z" fill="#c6d8ee" stroke="#3465a4"/><path d="M9 9l9 8M18 13v4h-5" fill="none" stroke="#fff" stroke-width="2"/></svg></button>
        <button><svg viewBox="0 0 24 24"><path d="M3 3h14l5 14H8z" fill="url(#g-blue)" stroke="#204a87"/><path d="M2 17h5v-3l5 5-5 4v-3H2z" fill="#fff" stroke="#3465a4"/></svg></button>
        <button><svg viewBox="0 0 24 24"><path d="M7 2h10l5 18H2z" fill="url(#g-blue)" stroke="#204a87"/><path d="M2 17h6v6H2zM16 17h6v6h-6z" fill="#fff" stroke="#3465a4"/></svg></button>

        <button><svg viewBox="0 0 24 24"><path d="M1 3l11 3 11-5v22l-11-4-11 2z" fill="url(#g-blue)" stroke="#204a87"/><path d="M3 12l5-4v3h8V8l5 4-5 4v-3H8v3z" fill="#fff"/></svg></button>
        <button><svg viewBox="0 0 24 24"><path d="M4 4l8 8 9-6v14l-9-8-8 8V4z" fill="none" stroke="#777"/><g fill="#5a8ccb" stroke="#204a87"><circle cx="4" cy="4" r="3"/><circle cx="12" cy="12" r="3"/><circle cx="21" cy="6" r="3"/><circle cx="20" cy="20" r="3"/><circle cx="4" cy="18" r="3"/></g></svg></button>
        <button><svg viewBox="0 0 24 24"><path d="M9 1h6l7 19h2v3h-9v-3h2l-1-4H8l-1 4h2v3H0v-3h2zM9 12h5l-2-7z" fill="#222"/></svg></button>
        <button><svg viewBox="0 0 24 24"><path d="M8 9l9-6 6 12-10 8z" fill="#eee" stroke="#777"/><path d="M2 21V9c2-4 6-3 8 0" fill="none" stroke="#4a7ab8" stroke-width="3"/><circle cx="15" cy="12" r="3" fill="#bbb" stroke="#777"/></svg></button>
        <button><svg viewBox="0 0 24 24"><path d="M2 2h20v20H2z" fill="url(#g-bw)" stroke="#555"/></svg></button>
        <button><svg viewBox="0 0 24 24"><path d="M2 22l3-7L18 2l4 4L9 19z" fill="#d88d33" stroke="#8a5210"/><path d="M18 2l4 4-3 3-4-4z" fill="#ea6b6b" stroke="#a33"/><path d="M2 22l2-5 3 3z" fill="#222"/></svg></button>

        <button><svg><use href="#brush"/></svg></button>
        <button><svg viewBox="0 0 24 24"><path d="M6 5h16l-5 12H2z" fill="#f59a9a" stroke="#b93636"/><path d="M2 17h15l5-12v4l-5 11H3z" fill="#e36a6a" stroke="#b93636"/></svg></button>
        <button class="sel"><svg viewBox="0 0 24 24"><path d="M20 1l3 3-14 13-3-3z" fill="#4a5258" stroke="#222"/><path d="M6 14l3 3-7 6z" fill="#4a80c4"/><path d="M10 9c7 0 3 10 12 9" fill="none" stroke="#777" stroke-width="2"/></svg></button>
        <button><svg viewBox="0 0 24 24"><path d="M5 2h7v5l4 4v10H1V11l4-4z" fill="#55606d" stroke="#2c3440"/><path d="M3 13h11v5H3z" fill="#8fb1dc"/><path d="M15 17l8 6M22 16l-6 6" stroke="#4674b0" stroke-width="2"/></svg></button>
        <button><svg><use href="#stamp"/></svg></button>
        <button><svg viewBox="0 0 24 24"><path d="M2 7l5-5 15 15-5 5z" fill="#f2d52b" stroke="#a98e08"/><path d="M17 2l5 5L7 22l-5-5z" fill="#f7e04a" stroke="#a98e08"/></svg></button>

        <button><svg viewBox="0 0 24 24"><path d="M4 8l19 3-2 12-15-3z" fill="url(#g-blue)" stroke="#204a87"/><path d="M8 0a3 3 0 0 1 2 6l1 4h4v5H1v-5h4l1-4a3 3 0 0 1 2-6z" fill="#f2d9a5" stroke="#7c5718"/></svg></button>
        <button><svg viewBox="0 0 24 24"><path d="M12 2c2 6 8 9 8 14a8 6 0 0 1-16 0c0-5 6-8 8-14z" fill="#a9c8ee" stroke="#5781b8"/></svg></button>
        <button><svg viewBox="0 0 24 24"><path d="M3 10l5-4 4 1 8-4-2 6 3 4-5 7-7 2-6-3z" fill="#f3c9a0" stroke="#a0672c"/><path d="M5 13l7-3M6 17l8-3" stroke="#a0672c"/></svg></button>
        <button><svg viewBox="0 0 24 24"><circle cx="9" cy="15" r="7" fill="#3d4245" stroke="#222"/><path d="M12 11l10-9" stroke="#3d4245" stroke-width="3"/></svg></button>
      </div>
      <svg class="swatch" width="54" height="42" viewBox="0 0 54 42"><path d="M0 0h54v42H0z" fill="#d6d2cf"/><path d="M16 15h38v27H16z" fill="#fff"/><rect x="18" y="17" width="34" height="24" rx="3" fill="#fff" stroke="#c4c1be"/><path d="M0 0h38v28H0z"/><path d="M5 35h7v6H5z" fill="#fff" stroke="#bbb"/><path d="M1 31h7v6H1z"/><path d="M44 4c5 0 5 3 5 7M46 1l-3 3 3 3M46 8l3 3 3-3" fill="none" stroke="#777"/></svg>

      <div class="dock-tabs"><div class="dock-tab"><svg width="15" height="15" viewBox="0 0 16 16"><path d="M1 15l7-7 3-6 4 1-1 4-5 2-6 7z" fill="#999" stroke="#555"/></svg>Tool Options</div><svg class="fold-btn" width="11" height="11"><use href="#collapse"/></svg></div>
      <div class="dock opts">
        <h3>Airbrush</h3>
        <label class="mode">Mode:<span class="sel-wrap"><select><option>Normal</option></select><svg width="12" height="8"><use href="#chev"/></svg></span></label>
        <label class="spin" style="--v:100%"><span>Opacity</span><input value="100.0"><svg width="13" height="24"><use href="#spin-max"/></svg></label>
        <div class="pick"><button class="pv"><svg width="28" height="25" viewBox="0 0 28 25"><path d="M2 1h24v23H2z" fill="#fff"/><circle cx="14" cy="13" r="8" fill="url(#g-brush)"/><path d="M26 16v8h-8z" fill="#8fa0f8"/><path d="M20 21h5M22 19v5" stroke="#000"/></svg></button><label>Brush<input value="2. Hardness 050"></label><svg width="15" height="14"><use href="#edit"/></svg></div>
        <div class="line"><label class="spin" style="--v:3%"><span>Size</span><input value="20.00"><svg width="13" height="24"><use href="#spin"/></svg></label><svg width="17" height="17"><use href="#reload"/></svg></div>
        <div class="line"><label class="spin" style="--v:46%"><span>Aspect Ratio</span><input value="0.00"><svg width="13" height="24"><use href="#spin"/></svg></label><svg width="17" height="17"><use href="#reload"/></svg></div>
        <div class="line"><label class="spin" style="--v:46%"><span>Angle</span><input value="0.00"><svg width="13" height="24"><use href="#spin"/></svg></label><svg width="17" height="17"><use href="#reload"/></svg></div>
        <div class="pick"><button class="pv"><svg width="28" height="25" viewBox="0 0 28 25"><circle cx="6" cy="5" r="2" fill="#e8731a"/><circle cx="12" cy="5" r="2" fill="#e8731a"/><circle cx="7" cy="10" r="2" fill="#e8731a"/><path d="M24 9v14H11l3-4c-4-6 4-11 8-7z" fill="#3d6fb8" stroke="#1e3f73"/></svg></button><label>Dynamics<input value="Pressure Opacity"></label><svg width="15" height="14"><use href="#edit"/></svg></div>
        <div class="exp"><svg width="8" height="11" viewBox="0 0 8 11"><path d="M2 1l4 4-4 4" fill="none" stroke="#222" stroke-width="2"/></svg>Dynamics Options</div>
        <label class="chk"><input type="checkbox">Apply Jitter</label>
        <label class="chk"><input type="checkbox">Smooth stroke</label>
        <label class="chk"><input type="checkbox">Motion only</label>
        <label class="spin" style="--v:49%"><span>Rate</span><input value="80.0"><svg width="13" height="24"><use href="#spin"/></svg></label>
        <label class="spin" style="--v:10%"><span>Flow</span><input value="10.0"><svg width="13" height="24"><use href="#spin"/></svg></label>
        <div class="dock-btns four">
          <button><svg width="15" height="15" viewBox="0 0 16 16"><path d="M1 1h14v14H1z" fill="#444b52"/><path d="M4 1h8v5H4zM4 9h8v6H4z" fill="#e8e8e8"/></svg></button>
          <button><svg width="17" height="16" viewBox="0 0 16 16"><path d="M4 1h10v14H4z" fill="#fff" stroke="#aaa"/><path d="M1 8l5-4v2c6 0 8 4 6 8 0-3-2-5-6-4v2z" fill="#f0b32e" stroke="#a06c08"/></svg></button>
          <button><svg width="13" height="13"><use href="#redx"/></svg></button>
          <button><svg width="17" height="17"><use href="#reload"/></svg></button>
        </div>
      </div>
    </div>
    <div class="g-mid">
      <div class="dock-tabs"><div class="dock-tab"><svg width="23" height="20" viewBox="0 0 23 20"><g fill="#f2f2f0" stroke="#777"><path d="M4 11h18l-3 8H1z"/><path d="M4 6h18l-3 8H1z"/><path d="M4 1h18l-3 8H1z"/></g></svg>Layers</div><svg class="fold-btn" width="11" height="11"><use href="#collapse"/></svg></div>
      <div class="dock layers">
        <label class="mode">Mode:<span class="sel-wrap"><select><option>Normal</option></select><svg width="12" height="8"><use href="#chev"/></svg></span></label>
        <label class="spin" style="--v:100%"><span>Opacity</span><input value="100.0"><svg width="13" height="24"><use href="#spin-max"/></svg></label>
        <div class="lock">Lock:<svg width="15" height="15"><use href="#brush"/></svg><svg width="16" height="16"><use href="#checker"/></svg></div>
        <div class="l-list">
          <div class="l-row on"><div class="eye"><svg width="12" height="10" viewBox="0 0 12 10"><path d="M0 5c3-5 9-5 12 0-3 5-9 5-12 0z" fill="#fff" stroke="#777"/><circle cx="6" cy="5" r="3" fill="#2c5a9c"/></svg></div><div class="tree"></div><div class="l-cell"><div class="l-thumb"><div class="l-check"></div></div>Layer</div></div>
          <div class="l-row alt"><div class="eye"></div><div class="tree last"></div><div class="l-cell"><div class="l-thumb blk"></div><b>Background</b></div></div>
        </div>
        <div class="dock-btns seven">
          <button><svg width="16" height="16" viewBox="0 0 16 16"><path d="M2 2h9l2 2v11H2z" fill="#fff" stroke="#999"/><circle cx="12" cy="4" r="4" fill="#3fae3a"/><path d="M12 2v4M10 4h4" stroke="#fff"/></svg></button>
          <button><svg width="17" height="15" viewBox="0 0 17 15"><path d="M1 1h6l1 3h7v10H1z" fill="#5f93d2" stroke="#274f86"/><path d="M1 6h15v8H1z" fill="#8cb4e4" stroke="#274f86"/></svg></button>
          <button><svg width="13" height="15" viewBox="0 0 13 15"><path d="M6 1l6 7H9v6H4V8H1z" fill="#b1abaa" stroke="#8d8786"/></svg></button>
          <button><svg width="13" height="15" viewBox="0 0 13 15"><path d="M6 14l6-7H9V1H4v6H1z" fill="#3e70b2" stroke="#1e3f73"/></svg></button>
          <button><svg width="16" height="16" viewBox="0 0 16 16"><path d="M5 5h10v10H5z" fill="#eee" stroke="#666"/><path d="M1 1h11v10H1z" fill="#fff" stroke="#444"/><path d="M3 3h7v6H3z" fill="#4a6c95"/></svg></button>
          <button><svg width="15" height="16" viewBox="0 0 15 16"><circle cx="7" cy="3" r="2" fill="none" stroke="#999" stroke-width="1.500"/><path d="M7 5v10M1 9c0 4 3 6 6 6s6-2 6-6M4 7h6" fill="none" stroke="#999" stroke-width="1.500"/></svg></button>
          <button><svg width="13" height="13"><use href="#redx"/></svg></button>
        </div>
      </div>
    </div>
    <div class="g-img">
      <div class="corner"><svg width="11" height="11" class="flip"><use href="#collapse"/></svg></div>
      <div class="hrule"><i>-3000</i><i>-2000</i><i>-1000</i><i>0</i><i>1000</i><i>2000</i><i>3000</i><i>4000</i><i>5000</i><i>6000</i><i>7000</i><i>8000</i></div>
      <div class="corner"><svg width="13" height="12" viewBox="0 0 13 12"><path d="M1 1h11v9H1z" fill="#eee" stroke="#357" stroke-dasharray="1 1"/><circle cx="6" cy="5" r="3" fill="none" stroke="#777"/><path d="M8 7l4 4" stroke="#777" stroke-width="2"/></svg></div>
      <div class="vrule"><i>-1000</i><i>0</i><i>1000</i><i>2000</i><i>3000</i><i>4000</i><i>5000</i><i>6000</i><i>7</i></div>
      <div class="canvas"><div class="image"></div></div>
      <div class="vbar"><svg width="10" height="7" viewBox="0 0 12 8"><path d="M2 6l4-4 4 4" fill="none" stroke="#222" stroke-width="2"/></svg><div class="trough"></div><svg width="10" height="7" viewBox="0 0 12 8"><path d="M2 6l4-4 4 4" fill="none" stroke="#222" stroke-width="2"/></svg><svg width="10" height="7"><use href="#chev"/></svg></div>
      <div class="corner"><svg width="10" height="11" viewBox="0 0 10 11"><path d="M1 1h8v9H1z" fill="none" stroke="#fff"/><path d="M1 1h8v9H1z" fill="none" stroke="#777" stroke-dasharray="2 2"/></svg></div>
      <div class="hbar"><svg width="7" height="10" viewBox="0 0 8 12"><path d="M6 2L2 6l4 4" fill="none" stroke="#222" stroke-width="2"/></svg><div class="trough"></div><svg width="7" height="10" viewBox="0 0 8 12"><path d="M6 2L2 6l4 4" fill="none" stroke="#222" stroke-width="2"/></svg><svg width="7" height="10" viewBox="0 0 8 12"><path d="M2 2l4 4-4 4" fill="none" stroke="#222" stroke-width="2"/></svg></div>
      <div class="corner"><svg width="14" height="14"><use href="#arrow-move"/></svg></div>
      <div class="status">
        <span class="sel-wrap unit"><select aria-label="Unidad"><option>px</option></select><svg width="12" height="8"><use href="#chev"/></svg></span>
        <span class="sel-wrap zoomsel"><input aria-label="Zoom" value="12.5 %"><svg width="12" height="8"><use href="#chev"/></svg></span>
        <span>Layer (485.3 MB)</span>
      </div>
    </div>
  </div>
</section>
<div class="panel">
  <button class="kmenu" aria-label="Menú"><svg width="30" height="31" viewBox="0 0 30 31"><rect x=".5" y=".5" width="29" height="30" rx="4" fill="url(#g-kde)" stroke="#1b4a94"/><path d="M12 6v16M21 7l-8 8 8 8" fill="none" stroke="#fff" stroke-width="3"/><path d="M6 11v5c0 6 2 9 7 10l5-1" fill="none" stroke="#fff" stroke-width="3" stroke-dasharray="3 2"/></svg></button>
  <svg width="30" height="11" viewBox="0 0 30 11"><circle cx="5" cy="6" r="4.500" fill="#d33" stroke="#811"/><circle cx="15" cy="6" r="4.500" fill="#36a" stroke="#135"/><circle cx="25" cy="6" r="4.500" fill="#5a2" stroke="#360"/></svg>
  <div class="tasks">
    <button><svg width="15" height="16" viewBox="0 0 15 16"><path d="M1 1h13v14H1z" fill="#dfe9f3" stroke="#4a82bd" stroke-width="2"/><path d="M1 8h13M5 5h5M5 11h5" stroke="#4a82bd" stroke-width="2"/></svg><span>assets – Dolphin</span></button>
    <button class="act"><svg width="16" height="16"><use href="#chrome"/></svg><span>02 - Sistemas de referencia d</span></button>
    <button><svg width="16" height="16"><use href="#chrome"/></svg><span>Práctica 1: Sistemas de coor</span></button>
    <button><svg width="16" height="16" viewBox="0 0 16 16"><path d="M3 15C1 9 6 2 14 1c1 6-3 12-9 12z" fill="#8cc63f" stroke="#4c7a15"/><path d="M3 15L12 4" stroke="#e8b" /><path d="M3 15L11 5" stroke="#fff"/></svg><span>QGIS 2.8.1-Wien</span></button>
    <button><svg width="16" height="16" viewBox="0 0 16 16"><path d="M1 1h14v14H1z" fill="#333" stroke="#777" stroke-width="2"/><path d="M4 4l2 2-2 2M7 8h3" fill="none" stroke="#eee"/></svg><span>malkab : emacsclient – Kons</span></button>
    <button><svg width="16" height="16" viewBox="0 0 16 16"><path d="M0 0h8v8H0z" fill="#e8562a"/><path d="M8 0h8v8H8z" fill="#7dbb37"/><path d="M0 8h8v8H0z" fill="#2e8fe0"/><path d="M8 8h8v8H8z" fill="#f5c62b"/><path d="M3 13c2-5 7-8 10-8M5 4l6 9" stroke="#fff" stroke-width="2"/></svg><span>Windows 7 - ArcGIS 10 [Run</span></button>
    <button><svg width="16" height="16" viewBox="0 0 16 16"><path d="M0 1h12v14H0z" fill="#6fa0dc"/><path d="M4 5h11v6H8v4H4z" fill="#2a62b0"/><path d="M2 3h5v4H2z" fill="#cfe0f4"/></svg><span>20-Error_25829-23030.png –</span></button>
    <button><svg width="16" height="16" viewBox="0 0 16 16"><circle cx="8" cy="8" r="6" fill="none" stroke="#d6249f" stroke-width="3"/><circle cx="8" cy="7" r="3" fill="#203a6a"/><path d="M2 14L13 2" stroke="#e77fd0" stroke-width="2"/></svg><span>20-Error_25829-23029.png -</span></button>
    <button><i></i><span>*[Untitled]-1.0 (RGB color, 2</span></button>
  </div>
  <div class="pager"><i class="w1"></i><i class="w2"></i><i></i><i></i></div>
  <svg class="dbx" width="24" height="24" viewBox="0 0 24 24"><path d="M0 0h24v24H0z"/><path d="M8 4l4 3-4 3-4-3zM16 4l4 3-4 3-4-3zM8 10l4 3-4 3-4-3zM16 10l4 3-4 3-4-3zM8 17l4-3 4 3-4 3z" fill="#fff"/><circle cx="17" cy="18" r="4" fill="#3bb54a"/><path d="M15 18l2 2 3-4" fill="none" stroke="#fff"/></svg>
  <svg width="18" height="20" viewBox="0 0 18 20"><g fill="none" stroke="#aaa" stroke-width="1.500"><path d="M4 1l8 13M14 1L6 14"/><circle cx="4" cy="16" r="3"/><circle cx="14" cy="16" r="3"/></g></svg>
  <svg width="24" height="22" viewBox="0 0 24 22"><g fill="none" stroke="#aaa" stroke-width="1.500"><path d="M2 8h4l5-5v16l-5-5H2zM14 7c2 3 2 5 0 8M17 4c4 5 4 9 0 14M20 1c5 7 5 13 0 20"/></g></svg>
  <svg width="20" height="22" viewBox="0 0 20 22"><g fill="none" stroke="#aaa" stroke-width="1.500"><path d="M4 1h12v11H4zM7 4h6v5H7zM10 12v4M1 18h6v3h6v-3h6v-2H1z"/></g></svg>
  <svg width="9" height="7" viewBox="0 0 9 7"><path d="M1 6h7L4.500 1z" fill="#eee" stroke="#aaa"/></svg>
  <div class="clock"><b>20:03</b><span>2015-05-03</span></div>
</div>
</div>
</div>
</body>
</html>
```
FILE: styles.css
```css
* { box-sizing: border-box; }
body { margin: 0; font: 11px/14px Roboto, "Noto Sans", sans-serif; color: #222; }
button, input, select { font: inherit; color: inherit; margin: 0; padding: 0; border: 0; background: none; }
button { cursor: pointer; }
a { color: inherit; text-decoration: none; }
h1, h2, h3, p, ol { margin: 0; padding: 0; font-weight: normal; }
svg { display: block; flex: none; }
.defs { position: absolute; width: 0; height: 0; }
.flip { transform: scaleX(-1); }

.desktop { display: grid; grid-template-columns: 1680fr 2048fr; height: 100vh; overflow: hidden; }
.screen-left, .screen-right { display: flex; flex-direction: column; min-width: 0; min-height: 0; }
.chrome { flex: 1; display: flex; flex-direction: column; min-height: 0; background: #d6d2cf; }
.void { flex: 0 0 102px; background: #000; }

/* browser frame */
.c-title { display: flex; align-items: center; height: 20px; gap: 7px; padding: 0 2px; }
.c-caption { flex: 1; padding-left: 24px; text-align: center; }
.c-tabs { display: flex; align-items: flex-end; height: 25px; padding-left: 8px; }
.tab { position: relative; display: flex; align-items: center; flex: none; width: 202px; height: 24px; margin-right: -10px; padding: 0 12px 0 12px; gap: 5px; isolation: isolate; }
.tab::before, .tab::after { content: ""; position: absolute; z-index: -1; inset: 0; background: #96928f; clip-path: polygon(9px 0, 191px 0, 202px 100%, 0 100%); }
.tab::after { inset: 1px 1px 1px 1px; background: #e8e6e4; clip-path: polygon(9px 0, 190px 0, 200px 100%, 0 100%); }
.tab.on::after { background: #d6d2cf; inset: 1px 1px 0 1px; }
.tab.on { z-index: 1; }
.tab span { width: 143px; white-space: nowrap; -webkit-mask-image: linear-gradient(90deg, #000 80%, transparent); }
.newtab { width: 28px; height: 15px; margin: 0 0 4px 17px; border: 1px solid #96928f; border-radius: 3px; background: #e3e0de; transform: skewX(20deg); }
.profile { margin: 0 6px 6px auto; width: 104px; height: 17px; border: 1px solid #96928f; border-top: 0; border-radius: 0 0 4px 4px; color: #666; font-weight: bold; }
.c-bar { display: flex; align-items: center; height: 37px; padding: 0 7px; gap: 9px; }
.omni { flex: 1; display: flex; align-items: center; height: 27px; gap: 6px; padding: 0 5px 0 8px; background: #fff; border: 1px solid #96928f; border-radius: 2px; }
.url { flex: 1; font-size: 16px; line-height: 22px; color: #8e8e8e; white-space: nowrap; overflow: hidden; }
.url b { font-weight: normal; color: #1c8c1c; }
.url i { font-style: normal; color: #222; }
.favstar, .graystar { fill: #c9c7c5; }
.graystar { fill: #555; }
.exts { display: flex; align-items: center; gap: 14px; padding-left: 2px; }
.ever { color: #444; }
.k-mark { font: bold 15px "Liberation Serif", serif; fill: #fff; }
.c-marks { display: flex; align-items: center; height: 25px; padding: 0 8px 5px; gap: 12px; border-bottom: 1px solid #a5a29f; }
.c-marks a { display: flex; align-items: center; gap: 6px; margin-right: 1px; }
.c-marks .apps { margin-right: 0; }
.c-marks .other { margin: 0 0 0 auto; padding-left: 7px; border-left: 1px solid #c3c0bd; height: 20px; }

/* document header */
.d-head { display: flex; height: 61px; background: #fff; border-bottom: 1px solid #d9d9d9; font-family: "Liberation Sans", Arial, sans-serif; }
.d-logo { width: 40px; display: grid; place-items: center; background: #f4b400; }
.d-names { padding: 6px 0 0 20px; }
.d-names h1 { display: flex; align-items: center; gap: 11px; font-size: 18px; line-height: 26px; color: #333; }
.outstar { fill: #fff; stroke: #bbb; overflow: visible; }
.d-menu { display: flex; gap: 16px; font-size: 13px; line-height: 26px; color: #000; }
.d-menu span { padding-left: 9px; color: #777; }
.d-right { margin-left: auto; padding-right: 44px; }
.d-mail { display: flex; align-items: center; justify-content: flex-end; gap: 8px; margin-right: -14px; height: 27px; color: #666; }
.d-btns { display: flex; gap: 8px; font-weight: bold; color: #333; }
.btn, .split { height: 29px; border: 1px solid #d5d5d5; border-radius: 2px; background: linear-gradient(#f7f7f7, #f0f0f0); }
.btn { width: 86px; font-weight: bold; }
.split { display: flex; width: 162px; }
.split button { display: flex; align-items: center; gap: 6px; padding-left: 9px; font-weight: bold; }
.split .dd { margin-left: auto; width: 19px; padding-left: 5px; border-left: 1px solid #ddd; color: #666; }
.blue { display: flex; align-items: center; justify-content: center; gap: 8px; width: 90px; color: #fff; background: #4b8df8; border-color: #3079ed; }
.d-tools { display: flex; align-items: center; height: 36px; background: linear-gradient(#f6f6f6, #ebebeb); border-bottom: 1px solid #d5d5d5; font: bold 11px/14px "Liberation Sans", Arial, sans-serif; color: #444; }
.grp { display: flex; align-items: center; height: 36px; padding: 0 5px 0 4px; border-left: 1px solid #d5d5d5; }
.grp.first { padding: 0 3px 0 57px; border: 0; }
.ic { display: grid; place-items: center; width: 26px; height: 26px; }
.first .ic { width: 27px; }
.ic.wide { display: flex; align-items: center; justify-content: center; gap: 4px; width: 38px; color: #888; }
.ic.on { border: 1px solid #bbb; border-radius: 2px; background: #e2e2e2; }
.plus { display: flex; width: 38px; height: 26px; margin-right: 3px; border: 1px solid #c8c8c8; border-radius: 2px; }
.plus button { flex: 1; font-size: 16px; font-weight: bold; color: #000; }
.plus button + button { display: grid; place-items: center; flex: 0 0 13px; border-left: 1px solid #c8c8c8; color: #888; }
.txt { padding: 0 8px 0 9px; }
.txt button { display: flex; align-items: center; gap: 4px; font-weight: bold; }
.txt svg { color: #888; }
.fold { margin-left: auto; margin-right: 52px; }

/* filmstrip */
.d-body { flex: 1; display: flex; min-height: 0; background: #eee; font-family: "Liberation Sans", Arial, sans-serif; }
.film { display: flex; width: 220px; border-right: 1px solid #d5d5d5; }
.film-list { flex: 1; display: flex; flex-direction: column; gap: 9px; overflow: hidden; }
.row { display: flex; flex: none; gap: 7px; }
.row > span { width: 37px; text-align: right; font-weight: bold; font-size: 12px; line-height: 13px; color: #666; }
.thumb { display: flex; flex-direction: column; width: 133px; height: 102px; padding: 6px 0 2px; border: 2px solid #ddd; background: #fff; color: #666; overflow: hidden; }
.cur .thumb { border-color: #666; }
.cut .thumb { height: 19px; border-top: 0; padding-top: 0; }
.ts { font-size: 2px; line-height: 3px; padding-left: 5px; }
.tt { font-size: 4px; line-height: 6px; padding-left: 5px; margin-right: 10px; margin-left: 1px; padding-bottom: 1px; border-bottom: 2px solid #eef2dc; }
.tb { display: grid; grid-template-columns: 6px 1fr; column-gap: 2px; align-content: start; flex: 1; min-height: 0; padding: 3px 0 0 5px; font-size: 3px; line-height: 6px; white-space: nowrap; }
.tb u { text-decoration: none; text-align: right; }
.tb p { line-height: 6px; }
.tb.big, .tb.big p { font-size: 4px; line-height: 8px; }
.tb.solo { grid-template-columns: 1fr; padding-left: 7px; }
.tb.center { display: block; padding: 0 0 0 40px; font-size: 3px; line-height: 6px; }
.mini { grid-column: 1 / -1; margin: 7px 0 4px 26px; }
.tf { display: flex; align-items: flex-end; gap: 1px; padding: 0 2px 0 5px; font-size: 2px; line-height: 3px; }
.tf span { flex: 1; }
.tf em { font: 4px/5px Lato, sans-serif; color: #999; }
.tf i { width: 7px; height: 5px; margin-bottom: 3px; border-radius: 2px; background: #84b800; }
.cover { margin: 24px 1px 0; flex: 1; padding: 6px; font-size: 6px; line-height: 8px; color: #fff; background: #95c11f; }
.film-bar { display: flex; flex-direction: column; justify-content: flex-end; width: 10px; padding: 0 1px 30px 0; }
.film-bar div { height: 44%; background: #bcbcbc; border: 1px solid #a8a8a8; }

/* slide */
.work { flex: 1; display: flex; flex-direction: column; min-width: 0; }
.stage { flex: 1; display: grid; place-items: center; padding: 2px 0 0 2px; }
.slide { display: flex; flex-direction: column; width: 1010px; height: 758px; padding-top: 33px; border: 1px solid #d2d2d2; background: #fff; color: #808080; box-shadow: 0 0 3px #ccc; }
.s-sub { padding-left: 34px; font-size: 20px; line-height: 24px; }
.slide h2 { padding-left: 34px; font-size: 34px; line-height: 42px; }
.s-rule { height: 3px; width: 922px; margin: 18px 0 24px; background: #84b800; }
.s-list { padding-left: 97px; font-size: 24px; line-height: 43px; white-space: nowrap; }
.s-list li { padding-left: 0; list-style: none; position: relative; counter-increment: step; }
.slide { counter-reset: step 9; }
.s-list li::before { content: counter(step) "."; position: absolute; left: -59px; }
.s-list b { font-style: italic; }
.qbar { margin: 49px 0 39px 250px; overflow: visible; }
.q-t { font: 17px "Liberation Serif", serif; fill: #34506f; }
.slide footer { display: flex; align-items: flex-end; margin-top: auto; padding: 0 19px 16px 31px; }
.s-foot { flex: 1; font-size: 14px; line-height: 20px; }
.s-logo { font: 31px/36px Lato, sans-serif; margin-right: 7px; }
.s-g { width: 50px; height: 39px; margin-bottom: 19px; border-radius: 20px; background: #84b800; color: #fff; font: 26px/39px Lato, sans-serif; text-align: center; }
.grip { height: 10px; border: 1px solid #ddd; border-width: 1px 0; background: #fff; color: #bbb; font-size: 8px; line-height: 8px; text-align: center; }
.notes { flex: 0 0 45px; padding: 4px 5px; background: #fff; font-size: 15px; line-height: 20px; color: #444; }

/* image editor */
.gimp { flex: 1; display: flex; flex-direction: column; min-height: 0; background: radial-gradient(ellipse 380px 50px at 50% 0, #fff, transparent), linear-gradient(#dfdfde 0, #e0dcdb 28px, #d9d4d2 80px, #c0b8b4 300px); box-shadow: inset 1px 0 #aaa, inset 0 -1px #a39b98; }
.g-title { display: flex; align-items: center; height: 20px; gap: 7px; padding: 0 3px 0 24px; color: #8a8886; }
.g-title span { flex: 1; padding-left: 24px; text-align: center; }
.g-menu { display: flex; gap: 16px; height: 18px; padding-left: 8px; line-height: 18px; }
.g-main { flex: 1; display: grid; grid-template-columns: 196px 313px 1fr; min-height: 0; }
.g-left, .g-mid { display: flex; flex-direction: column; min-height: 0; }
.g-left { padding: 0 6px 2px 1px; }
.g-mid { padding: 3px 5px 2px 0; }
.wilber { margin-bottom: 2px; }
.toolbox { display: grid; grid-template-columns: repeat(6, 31px); grid-auto-rows: 31px; background: #d6d2cf; padding: 0 0 1px; margin-right: -1px; }
.toolbox button { display: grid; place-items: center; border-radius: 3px; }
.toolbox svg { width: 20px; height: 20px; }
.toolbox .sel { background: #c2bebb; border: 1px solid #99948f; }
.swatch { margin: 3px 0 5px 67px; }
.dock-tabs { display: flex; justify-content: space-between; font-size: 9px; }
.g-left .dock-tabs { margin-left: 1px; }
.dock-tab { display: flex; align-items: center; gap: 3px; height: 24px; padding: 0 4px; border: 1px solid #f4f2f1; border-bottom: 0; border-radius: 4px 4px 0 0; background: linear-gradient(#dedad8, #cbc5c2); }
.g-mid .dock-tab { height: 31px; background: linear-gradient(#e6e4e2, #dcd8d6); }
.fold-btn { margin: 5px 5px 0 0; }
.g-mid .fold-btn { margin-top: 8px; }
.dock { flex: 1; display: flex; flex-direction: column; min-height: 0; border: 1px solid #f4f2f1; border-radius: 0 4px 4px 4px; font-size: 9px; line-height: 12px; }
.opts { margin-left: 1px; padding: 4px 4px 5px 3px; gap: 4px; }
.opts h3 { font-weight: bold; font-size: 11px; line-height: 12px; padding-left: 1px; }
.mode { display: flex; align-items: center; gap: 4px; height: 20px; padding-left: 1px; margin-right: 2px; }
.sel-wrap { flex: 1; position: relative; display: flex; }
.sel-wrap select { flex: 1; appearance: none; height: 18px; padding-left: 4px; border: 1px solid #aaa4a1; border-radius: 4px; background: linear-gradient(#eeecea, #cfcbc8); }
.sel-wrap svg { position: absolute; right: 3px; top: 5px; pointer-events: none; }
.spin { display: flex; align-items: center; flex: none; width: 100%; height: 26px; padding-left: 2px; border: 1px solid #222; background: linear-gradient(#fff, #fff) right / 13px 100% no-repeat, radial-gradient(ellipse at 50% 50%, #57a9dc 20%, transparent 90%) 0 0 / var(--v) 100% no-repeat, linear-gradient(#9ecbf0, #5aacde 50%, #9ecbf0) 0 0 / var(--v) 100% no-repeat, #fff; }
.spin input { flex: 1; width: 0; text-align: right; padding-right: 2px; }
.pick { display: flex; align-items: center; height: 31px; padding: 0 4px 0 3px; }
.pv { width: 28px; height: 26px; border-radius: 3px; background: #d9d5d2; box-shadow: 0 1px 2px #666; }
.pick label { display: flex; flex-direction: column; width: 117px; padding-left: 5px; margin-right: auto; }
.pick input { margin-left: 4px; height: 16px; padding-left: 4px; border: 1px solid #aaa4a1; border-radius: 3px; background: #fff; }
.pick > svg { margin-top: 8px; }
.line { display: flex; align-items: center; gap: 6px; padding-right: 4px; }
.line .spin { flex: 1; width: auto; }
.exp { display: flex; align-items: center; gap: 7px; height: 19px; padding-left: 7px; }
.chk { display: flex; align-items: center; gap: 7px; height: 26px; padding-left: 4px; }
.chk input { appearance: none; width: 16px; height: 16px; border: 1px solid #a9a29f; border-radius: 4px; background: #d6d2cf; box-shadow: 0 1px 1px #888; }
.dock-btns { display: flex; align-items: center; margin-top: auto; height: 18px; }
.dock-btns button { display: grid; place-items: center; flex: 1; }
.layers { padding: 6px 3px 5px 3px; gap: 4px; }
.layers .mode { margin-right: 4px; padding: 0; }
.lock { display: flex; align-items: center; gap: 9px; height: 20px; }
.l-list { flex: 1; margin: 0 2px 4px; border: 1px solid #9a9491; border-radius: 0 0 3px 3px; background: #fff; }
.l-row { display: flex; height: 38px; }
.alt { background: #f6f5f4; }
.eye { display: flex; align-items: center; width: 39px; padding-left: 4px; border-radius: 3px; }
.tree { width: 14px; margin-right: 0; background: linear-gradient(#aaa, #aaa) 7px 0 / 1px 100% no-repeat, linear-gradient(#aaa, #aaa) 7px 19px / 6px 1px no-repeat, #fff; }
.tree.last { background: linear-gradient(#aaa, #aaa) 7px 0 / 1px 19px no-repeat, linear-gradient(#aaa, #aaa) 7px 19px / 6px 1px no-repeat; }
.l-cell { flex: 1; display: flex; align-items: center; gap: 5px; padding-left: 2px; border-radius: 3px; }
.on > .eye, .on > .l-cell { background: linear-gradient(#cfe8fc, #98caf0); border: 1px solid #8ec0e8; }
.l-cell b { font-size: 11px; }
.l-thumb { padding: 2px; background: #fff; }
.l-thumb.blk { width: 36px; height: 36px; border: 2px solid #000; }
.l-check { width: 32px; height: 32px; background: repeating-conic-gradient(#999 0 25%, #666 0 50%) 0 0 / 8px 8px; }

/* image window */
.g-img { display: grid; grid-template: 16px 1fr 18px 27px / 17px 1fr 22px; min-height: 0; min-width: 0; }
.corner { display: grid; place-items: center; }
.hrule, .vrule, .canvas { background: #d6d2cf; overflow: hidden; }
.hrule { display: flex; border-bottom: 1px solid #222; }
.hrule i { flex: none; width: 125px; height: 16px; padding-left: 3px; font: 9px/14px Roboto, sans-serif; background: linear-gradient(#222, #222) 0 100% / 1px 12px no-repeat, repeating-linear-gradient(90deg, #222 0 1px, transparent 1px 20%) 0 100% / 100% 5px no-repeat, repeating-linear-gradient(90deg, #222 0 1px, transparent 1px 10%) 0 100% / 100% 4px no-repeat; }
.vrule { display: flex; flex-direction: column; padding-top: 10px; margin-right: 2px; border-right: 1px solid #222; }
.vrule i { flex: none; width: 14px; height: 125px; padding: 2px 7px 0 3px; font: 9px/8px Roboto, sans-serif; word-break: break-all; line-break: anywhere; background: linear-gradient(#222, #222) 100% 0 / 12px 1px no-repeat, repeating-linear-gradient(#222 0 1px, transparent 1px 20%) 100% 0 / 5px 100% no-repeat, repeating-linear-gradient(#222 0 1px, transparent 1px 10%) 100% 0 / 3px 100% no-repeat; }
.canvas { display: grid; place-items: center; }
.image { width: 751px; height: 751px; padding: 1px; background: repeating-conic-gradient(#999 0 25%, #666 0 50%) 0 0 / 16px 16px content-box content-box, repeating-linear-gradient(135deg, #000 0 4px, #f4f01c 4px 8px); }
.vbar { display: flex; flex-direction: column; align-items: center; padding: 4px 6px 0 0; gap: 3px; }
.trough { border: 2px solid #76706c; border-radius: 4px; background: #d5d2ce; box-shadow: inset 0 0 0 1px #eceae8; }
.vbar .trough { flex: 1; width: 13px; }
.hbar { display: flex; align-items: center; gap: 3px; padding: 0 4px 0 5px; }
.hbar .trough { flex: 1; height: 14px; }
.status { grid-column: 1 / -1; display: flex; align-items: center; gap: 6px; padding: 0 0 2px 88px; }
.status .sel-wrap { flex: none; }
.unit { width: 39px; }
.zoomsel { width: 55px; }
.zoomsel input { width: 55px; height: 17px; padding-left: 12px; border: 1px solid #aaa4a1; border-radius: 4px; background: #fff; font-size: 9px; }
.unit select { font-size: 10px; height: 16px; }

/* desktop panel */
.panel { display: flex; align-items: center; flex: none; height: 35px; padding: 0 6px 0 1px; background: #f0f0f0; border-top: 1px solid #fff; color: #111; }
.kmenu { margin-right: 11px; }
.tasks { display: flex; flex: 1; min-width: 0; overflow: hidden; }
.tasks button { display: flex; align-items: center; gap: 4px; flex: none; width: 180px; height: 28px; margin-right: 4px; padding: 0 6px; border: 1px solid transparent; border-radius: 3px; text-align: left; }
.tasks .act { background: #f5f5f5; border-color: #d0d0d0; }
.tasks i { width: 14px; }
.tasks span { flex: 1; min-width: 0; white-space: nowrap; -webkit-mask-image: linear-gradient(90deg, #000 80%, transparent); }
.pager { display: grid; grid-template-columns: 47px 47px; grid-auto-rows: 13px; gap: 4px; margin-right: 8px; }
.pager i { border: 1px solid #aaa; border-radius: 2px; background: #dcdcdc; }
.pager .w1 { background: linear-gradient(90deg, #bbb 45%, #999 45% 48%, #dcdcdc 48%); }
.pager .w2 { background: linear-gradient(90deg, #222 44%, #555 44% 46%, #2c2c2c 46%); border-color: #222; }
.panel > svg { margin-right: 6px; }
.panel .dbx { margin-right: 7px; }
.clock { display: flex; flex-direction: column; align-items: center; flex: none; width: 60px; margin-left: 8px; white-space: nowrap; }
.clock b { font-size: 17px; line-height: 18px; font-weight: 500; }
.clock span { font-size: 10px; line-height: 12px; color: #444; }
```
